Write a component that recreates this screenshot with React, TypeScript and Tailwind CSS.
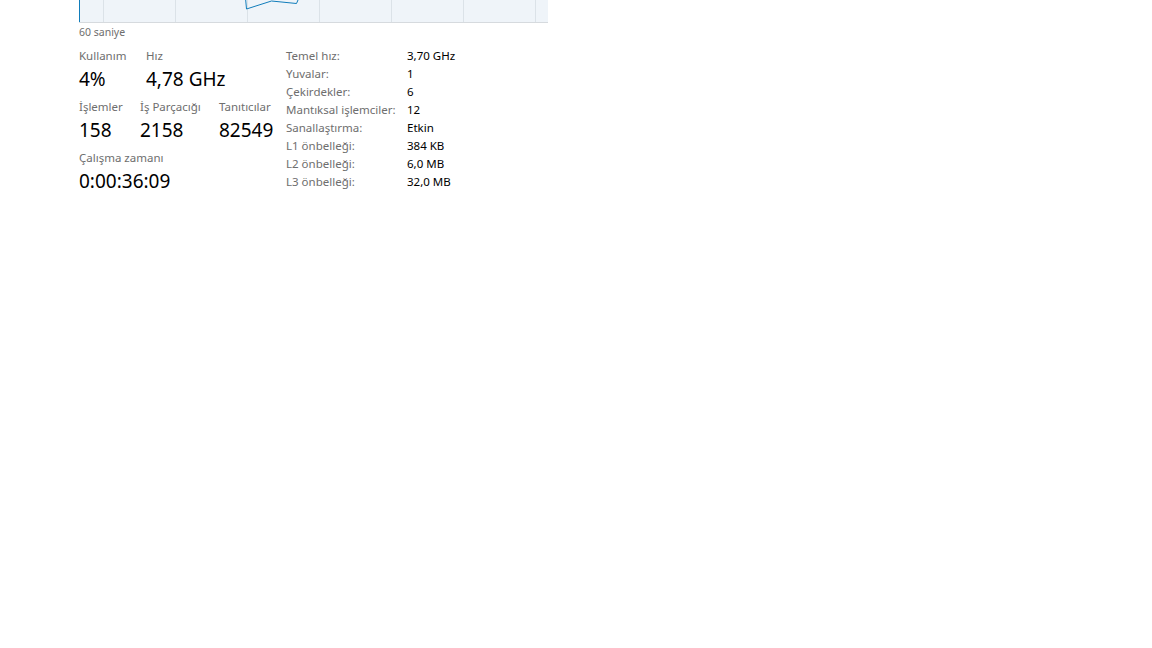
import React from 'react';

type Stat = { label: string; value: string; width?: string };

const detailRows: [string, string][] = [
    ["Temel hız:", "3,70 GHz"],
    ["Yuvalar:", "1"],
    ["Çekirdekler:", "6"],
    ["Mantıksal işlemciler:", "12"],
    ["Sanallaştırma:", "Etkin"],
    ["L1 önbelleği:", "384 KB"],
    ["L2 önbelleği:", "6,0 MB"],
    ["L3 önbelleği:", "32,0 MB"],
];

const gridX = [24, 96, 168, 240, 312, 384, 456];

const UsageChart: React.FC = () => (
    <svg width={469} height={23} viewBox="0 0 469 23" className="block">
        <rect x={0} y={0} width={469} height={22} fill="#eff4f9" />
        {gridX.map(x => (
            <line key={x} x1={x + 0.5} y1={0} x2={x + 0.5} y2={22} stroke="#dbe2e8" strokeWidth={1} />
        ))}
        <line x1={0} y1={22.5} x2={469} y2={22.5} stroke="#d6dade" strokeWidth={1} />
        <line x1={0.5} y1={0} x2={0.5} y2={22} stroke="#117dbb" strokeWidth={1} />
        <polyline
            points="166.7,0 167.5,9 192.5,1 217.5,3.5 219,0"
            fill="none"
            stroke="#117dbb"
            strokeWidth={1}
        />
    </svg>
);

const StatBlock: React.FC<Stat> = ({ label, value, width }) => (
    <div className={width}>
        <div className="text-[11.5px] leading-[18px] text-[#6e6e6e] whitespace-nowrap">{label}</div>
        <div className="text-[19px] leading-[28px] text-black whitespace-nowrap">{value}</div>
    </div>
);

export default function App() {
    return (
        <div className="w-[1152px] h-[648px] bg-white font-['Segoe_UI','Noto_Sans',sans-serif]">
            <div className="pl-[79px]">
                <UsageChart />
                <div className="mt-[2px] text-[10.5px] leading-[14px] text-[#6e6e6e]">60 saniye</div>

                <div className="mt-[8px] flex items-start">
                    <div className="w-[207px] flex flex-col gap-[5px]">
                        <div className="flex">
                            <StatBlock label="Kullanım" value="4%" width="w-[67px]" />
                            <StatBlock label="Hız" value="4,78 GHz" />
                        </div>
                        <div className="flex">
                            <StatBlock label="İşlemler" value="158" width="w-[61px]" />
                            <StatBlock label="İş Parçacığı" value="2158" width="w-[79px]" />
                            <StatBlock label="Tanıtıcılar" value="82549" />
                        </div>
                        <StatBlock label="Çalışma zamanı" value="0:00:36:09" />
                    </div>

                    <div className="grid grid-cols-[121px_auto] text-[11.5px] leading-[18px]">
                        {detailRows.map(([k, v]) => (
                            <React.Fragment key={k}>
                                <div className="text-[#6e6e6e] whitespace-nowrap">{k}</div>
                                <div className="text-black whitespace-nowrap">{v}</div>
                            </React.Fragment>
                        ))}
                    </div>
                </div>
            </div>
        </div>
    );
}
